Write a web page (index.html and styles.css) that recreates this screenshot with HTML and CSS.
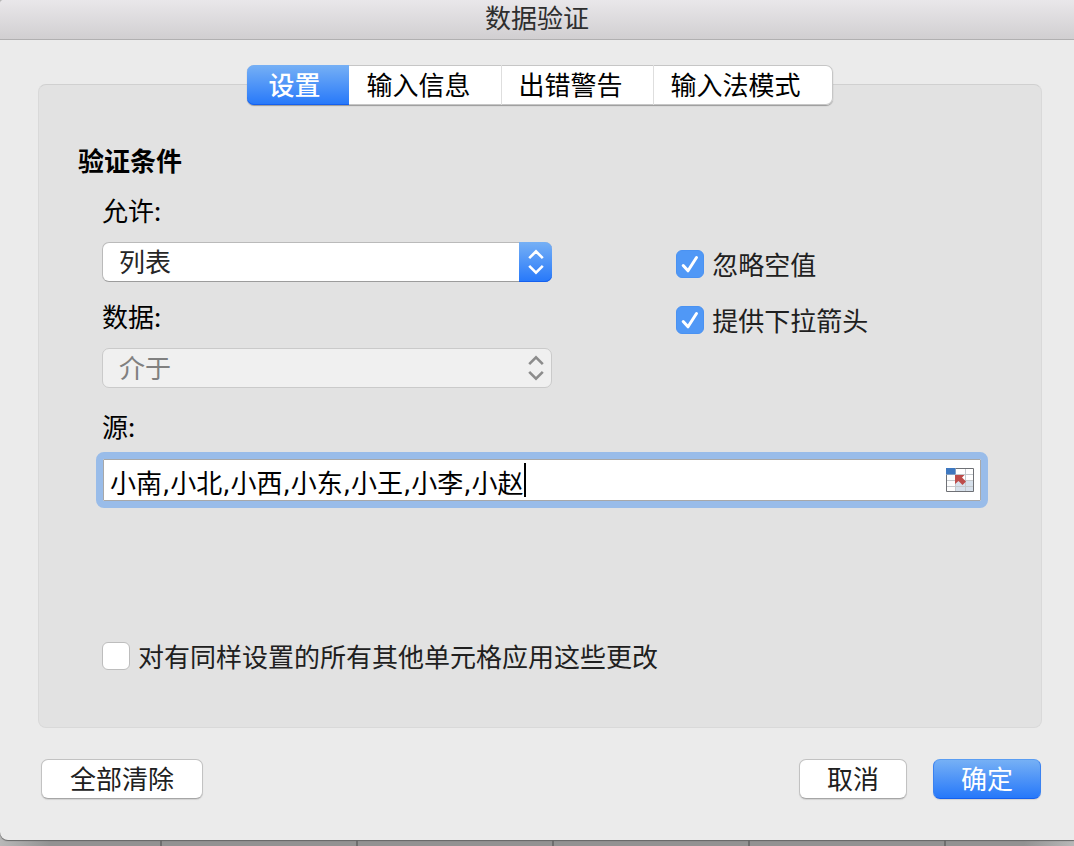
FILE: index.html
```html
<!DOCTYPE html>
<html lang="zh-CN">
<head>
<meta charset="utf-8">
<meta name="viewport" content="width=device-width, initial-scale=1">
<title>数据验证</title>
<link rel="stylesheet" href="styles.css">
</head>
<body>
<main class="dialog">
  <header class="titlebar"><h1 class="title">数据验证</h1></header>
  <form class="content">
    <div class="tabs" role="tablist">
      <button class="tab tab-active" type="button" role="tab" aria-selected="true">设置</button>
      <button class="tab" type="button" role="tab" aria-selected="false">输入信息</button>
      <button class="tab" type="button" role="tab" aria-selected="false">出错警告</button>
      <button class="tab" type="button" role="tab" aria-selected="false">输入法模式</button>
    </div>

    <section class="panel" role="tabpanel">
      <h2 class="heading">验证条件</h2>
      <div class="criteria">
        <div class="selects">
          <label class="label" for="allow">允许:</label>
          <div class="select-box">
            <select class="select" id="allow"><option>列表</option></select>
            <span class="cap cap-blue">
              <svg class="arrows" viewBox="0 0 16 26" aria-hidden="true"><path d="M1.200 9.200 8 2.400l6.800 6.800M1.200 16.800 8 23.600l6.800-6.800"/></svg>
            </span>
          </div>
          <label class="label label-next" for="data">数据:</label>
          <div class="select-box">
            <select class="select" id="data" disabled><option>介于</option></select>
            <span class="cap">
              <svg class="arrows" viewBox="0 0 16 26" aria-hidden="true"><path d="M1.200 9.200 8 2.400l6.800 6.800M1.200 16.800 8 23.600l6.800-6.800"/></svg>
            </span>
          </div>
        </div>
        <div class="options">
          <label class="check">
            <span class="check-box">
              <input class="check-input" type="checkbox" checked>
              <svg class="tick" viewBox="0 0 28 28" aria-hidden="true"><path d="M7.200 15.500 12 20.800 20.500 7.500"/></svg>
            </span>
            忽略空值
          </label>
          <label class="check">
            <span class="check-box">
              <input class="check-input" type="checkbox" checked>
              <svg class="tick" viewBox="0 0 28 28" aria-hidden="true"><path d="M7.200 15.500 12 20.800 20.500 7.500"/></svg>
            </span>
            提供下拉箭头
          </label>
        </div>
      </div>

      <div class="source">
        <label class="label" for="source">源:</label>
        <div class="field">
          <input class="field-input" id="source" type="text" value="小南,小北,小西,小东,小王,小李,小赵">
          <span class="caret"></span>
          <button class="picker" type="button" aria-label="选择区域">
            <svg class="picker-icon" viewBox="0 0 28 24" aria-hidden="true">
              <rect width="28" height="24" fill="#fdfdfd"/>
              <path d="M9 12h19v12H9z" fill="#d6e0eb"/>
              <path d="M10 1h17v5H10zM10 7h17v5H10z" fill="#fff"/>
              <path d="M1 6.500h26M1 12.500h26M1 18.500h26M9.500 1v22M19.500 1v22" stroke="#c4c8cc" fill="none"/>
              <path d="M0 0h9.500v6.500H0z" fill="#3e78c0"/>
              <path d="M.5 6.500V23.500h27V.5H9.500" stroke="#6e7075" fill="none"/>
              <path d="M9 7h9.500l-2.500 2.500 4 4-3.500 3.500-4-4-3.500 3z" fill="#bd4c4a"/>
            </svg>
          </button>
        </div>
      </div>

      <label class="check apply">
        <span class="check-box"><input class="check-input" type="checkbox"></span>
        对有同样设置的所有其他单元格应用这些更改
      </label>
    </section>

    <footer class="footer">
      <button class="button button-wide" type="button">全部清除</button>
      <span class="footer-end">
        <button class="button" type="button">取消</button>
        <button class="button button-primary" type="button">确定</button>
      </span>
    </footer>
  </form>
</main>
</body>
</html>
```

FILE: styles.css
```css
* { box-sizing: border-box; }

body {
  margin: 0;
  min-height: 100vh;
  padding-bottom: 6px;
  display: flex;
  flex-direction: column;
  background:
    repeating-linear-gradient(90deg, transparent 0 160px, #6e6e6e 160px 162px, transparent 162px 196px),
    linear-gradient(90deg, #b8b8b8, #929292 50px, #929292 calc(100% - 50px), #b8b8b8);
  color: #000;
  font: 26px/34px "Noto Sans CJK SC", sans-serif;
}

button, input, select { font: inherit; color: inherit; margin: 0; }

.dialog {
  flex: 1;
  display: flex;
  flex-direction: column;
  background: #ebebeb;
  border-radius: 4px 0 0 8px;
  box-shadow: 0 1px 1px #666;
}

.titlebar {
  height: 40px;
  border-bottom: 1px solid #b1b0b1;
  border-radius: 4px 0 0;
  background: linear-gradient(#e9e7ea, #d1cfd1);
}

.title {
  margin: 0;
  color: #2e2e2e;
  font-size: 26px;
  font-weight: 400;
  text-align: center;
}

.content {
  flex: 1;
  display: flex;
  flex-direction: column;
  padding: 25px 32px 41px 38px;
}

.tabs {
  position: relative;
  z-index: 1;
  align-self: center;
  display: flex;
  height: 40px;
  border-radius: 7px;
  background: #fff;
  box-shadow: 0 0 0 1px #c6c6c6 inset, 0 1px 1px #999;
}

.tab {
  padding: 0 30px 3px 17px;
  border: 0;
  border-left: 1px solid #dedede;
  background: none;
}

.tab:last-child { padding-right: 32px; }

.tab-active {
  padding: 0 29px 3px 21px;
  border: 0;
  border-radius: 7px 0 0 7px;
  background: linear-gradient(#76b0f5, #2678fa);
  box-shadow: 0 -1px #1560ee inset;
  color: #fff;
  font-weight: 500;
}

.tab-active + .tab {
  border-left: 0;
}

.panel {
  flex: 1;
  margin-top: -21px;
  padding: 58px 53px 52px 39px;
  border: 1px solid #d9d9d9;
  border-top-color: #d0d0d0;
  border-radius: 8px;
  background: #e2e2e2;
}

.heading {
  margin: 0 0 16px;
  font-size: 26px;
  font-weight: 700;
}

.criteria {
  display: grid;
  grid-template-columns: 575fr 312fr;
  padding-left: 24px;
}

.label { display: block; }
.label-next { margin-top: 17px; }

.select-box {
  position: relative;
  max-width: 450px;
  margin-top: 15px;
}

.select {
  display: block;
  width: 100%;
  height: 40px;
  padding: 0 40px 2px 16px;
  border: 1px solid #bababa;
  border-bottom-color: #9c9c9c;
  border-radius: 7px;
  background: #fff;
  color: #262626;
  appearance: none;
}

.select:disabled {
  border-color: #cacaca;
  background: #f0f0f0;
  color: #808080;
  opacity: 1;
}

.cap {
  position: absolute;
  top: 0;
  right: 0;
  display: grid;
  place-items: center;
  width: 33px;
  height: 40px;
  border-radius: 0 7px 7px 0;
  color: #8c8c8c;
  pointer-events: none;
}

.cap-blue {
  background: linear-gradient(#76b0f5, #2678fa);
  box-shadow: 0 -1px #1560ee inset;
  color: #fff;
}

.arrows {
  width: 16px;
  height: 26px;
  fill: none;
  stroke: currentColor;
  stroke-width: 2.6;
}

.options {
  display: flex;
  flex-direction: column;
  gap: 22px;
  padding-top: 54px;
}

.check {
  display: flex;
  align-items: center;
  gap: 8px;
  color: #202020;
  white-space: nowrap;
}

.check-box {
  position: relative;
  width: 28px;
  height: 28px;
}

.check-input {
  display: block;
  width: 28px;
  height: 28px;
  border: 1px solid #bdbdbd;
  border-radius: 6px;
  background: #fff;
  appearance: none;
}

.check-input:checked {
  border-color: #4a92f2;
  background: #5098f6;
}

.tick {
  position: absolute;
  inset: 0;
  fill: none;
  stroke: #fff;
  stroke-width: 3;
  stroke-linecap: round;
  stroke-linejoin: round;
  pointer-events: none;
}

.source {
  margin-top: 21px;
  padding-left: 24px;
}

.field {
  display: flex;
  align-items: center;
  height: 42px;
  margin: 16px 7px 7px 1px;
  padding: 0 6px;
  border: 1px solid #a8a8a8;
  outline: 7px solid #99bce9;
  border-radius: 1px;
  background: #fff;
}

.field-input {
  min-width: 0;
  height: 40px;
  padding: 2px 0 0;
  border: 0;
  outline: 0;
  background: none;
  font-family: "DejaVu Sans", "Noto Sans CJK SC", sans-serif;
  field-sizing: content;
}

.caret {
  width: 2px;
  height: 34px;
  background: #000;
}

.picker {
  margin-left: auto;
  padding: 0;
  border: 0;
  background: none;
}

.picker-icon {
  display: block;
  width: 28px;
  height: 24px;
}

.apply {
  margin-top: 138px;
  padding-left: 24px;
}

.footer {
  display: flex;
  justify-content: space-between;
  margin: 31px 1px 0 3px;
}

.footer-end {
  display: flex;
  gap: 26px;
}

.button {
  width: 108px;
  height: 40px;
  padding: 0 0 2px;
  border: 1px solid #c2c2c2;
  border-bottom-color: #a6a6a6;
  border-radius: 7px;
  background: #fff;
  box-shadow: 0 1px 1px #d2d2d2;
  color: #202020;
}

.button-wide { width: 162px; }

.button-primary {
  border-color: #5a9df2 #3b82f0 #1560ee;
  background: linear-gradient(#76b0f5, #2678fa);
  color: #fff;
}
```
